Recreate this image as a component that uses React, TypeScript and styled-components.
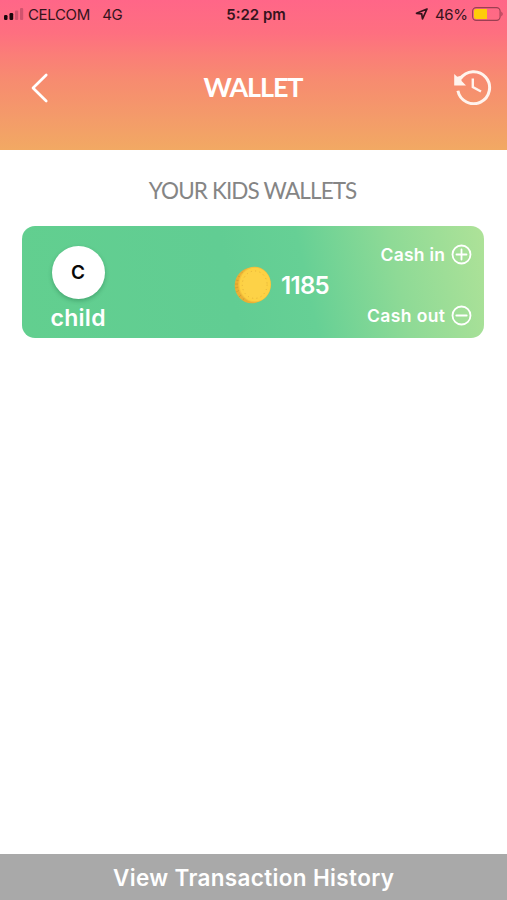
import React from 'react';
import styled, { createGlobalStyle } from 'styled-components';

const GlobalStyle = createGlobalStyle`
  * { box-sizing: border-box; }
  body { margin: 0; background: #fff; font-family: Inter, 'Liberation Sans', sans-serif; }
`;

const Screen = styled.div`
  width: 100%;
  height: 100vh;
  display: flex;
  flex-direction: column;
  overflow: hidden;
`;

const Header = styled.header`
  height: 150px;
  flex: none;
  background: linear-gradient(#ff6688 0%, #fe6f80 22%, #fb7d78 36%, #f78b70 53%, #f49a6a 77%, #f2a963 100%);
`;

const StatusBar = styled.div`
  height: 28px;
  padding: 0 3px 0 4px;
  display: grid;
  grid-template-columns: 1fr auto 1fr;
  align-items: center;
  color: #35131c;
`;

const StatusGroup = styled.div<{ $end?: boolean }>`
  display: flex;
  align-items: center;
  justify-content: ${(p) => (p.$end ? 'flex-end' : 'flex-start')};
`;

const Label = styled.span<{ $size: number; $weight?: number; $track?: number; $color?: string; $caps?: boolean }>`
  font-family: ${(p) => (p.$caps ? "Lato, 'Liberation Sans', sans-serif" : 'inherit')};
  font-size: ${(p) => p.$size}px;
  font-weight: ${(p) => p.$weight ?? 600};
  letter-spacing: ${(p) => p.$track ?? 0}px;
  margin-right: ${(p) => -(p.$track ?? 0)}px;
  color: ${(p) => p.$color ?? 'inherit'};
  line-height: 1;
  white-space: nowrap;
`;

const Signal = styled.svg`
  margin: 0 4px 0 0;
`;

const Network = styled.div`
  margin-left: 12px;
  display: flex;
`;

const Clock = styled.div`
  display: flex;
  padding-left: 4px;
`;

const Arrow = styled.svg`
  margin-right: 7px;
`;

const Battery = styled.svg`
  margin-left: 4px;
`;

const NavBar = styled.nav`
  height: 119px;
  padding: 0 15px 0 30px;
  display: grid;
  grid-template-columns: 39px 1fr 39px;
  align-items: center;
  justify-items: center;
  color: #fff;
`;

const BackIcon = styled.svg`
  justify-self: start;
`;

const HistoryIcon = styled.svg`
  margin-bottom: 4px;
`;

const NavTitle = styled.h1`
  margin: 0 0 0 -15px;
  padding-bottom: 2px;
  display: flex;
`;

const Content = styled.main`
  flex: 1;
  padding: 28px 23px 0 22px;
`;

const SectionTitle = styled.h2`
  margin: 0;
  height: 48px;
  padding-top: 2px;
  display: flex;
  justify-content: center;
`;

const Card = styled.section`
  height: 112px;
  border-radius: 13px;
  background: linear-gradient(78deg, #62cf8f 0%, #61cd93 45%, #66d095 61%, #8eda96 80%, #aee298 100%);
  display: grid;
  grid-template-columns: 112px 1fr 130px;
  color: #fff;
`;

const Owner = styled.div`
  display: flex;
  flex-direction: column;
  align-items: center;
  padding-top: 19.5px;
  gap: 8.5px;
`;

const Avatar = styled.div`
  width: 53px;
  height: 53px;
  border-radius: 50%;
  background: #fff;
  color: #080808;
  box-shadow: 0 2px 4px rgba(0, 70, 35, 0.28);
  display: flex;
  align-items: center;
  justify-content: center;
`;

const Balance = styled.div`
  display: flex;
  align-items: center;
  gap: 9px;
  padding: 6px 0 0 100px;
`;

const Amount = styled.div`
  display: flex;
  padding-top: 2px;
`;

const Actions = styled.div`
  display: flex;
  flex-direction: column;
  justify-content: space-between;
  align-items: flex-end;
  padding: 18px 12px 12px 0;
`;

const Action = styled.button`
  border: 0;
  padding: 0;
  background: none;
  color: inherit;
  font-family: inherit;
  height: 21px;
  display: flex;
  align-items: center;
  gap: 6px;
`;

const HistoryButton = styled.button`
  flex: none;
  height: 46px;
  border: 0;
  padding: 2px 0 0;
  background: #a9a9a9;
  color: #fff;
  font-family: inherit;
  display: flex;
  align-items: center;
  justify-content: center;
`;

function ActionIcon({ plus }: { plus?: boolean }) {
  return (
    <svg width="21" height="21" viewBox="0 0 21 21" fill="none" stroke="#fff" strokeWidth="1.8" strokeLinecap="round">
      <circle cx="10.5" cy="10.5" r="9" />
      <path d={plus ? 'M5.5 10.5h10M10.5 5.5v10' : 'M5.3 10.5h10.4'} />
    </svg>
  );
}

function Coin() {
  return (
    <svg width="38" height="38" viewBox="0 0 38 38">
      <ellipse cx="17.5" cy="19.5" rx="16.8" ry="17.8" fill="#e9b035" />
      <path d="M2 14l4 1M1 18h4M1 22l4-1M2 26l4-2M5 31l3-3M4 10l4 2M8 6l2 3M9 34l2-3" stroke="#cf9c30" strokeWidth="0.8" />
      <ellipse cx="20.6" cy="18.5" rx="16.4" ry="17.8" fill="#f5c03c" />
      <ellipse cx="21" cy="18.5" rx="15.5" ry="16.8" fill="#fdd143" />
      <ellipse cx="20.7" cy="18.7" rx="12.4" ry="13.7" fill="#fdd247" stroke="#e4b13b" strokeWidth="1" strokeDasharray="1 3.4" />
    </svg>
  );
}

export default function App() {
  return (
    <Screen>
      <GlobalStyle />
      <Header>
        <StatusBar>
          <StatusGroup>
            <Signal width="20" height="12" viewBox="0 0 20 12">
              <rect x="0" y="7" width="3.5" height="5" rx="1.2" fill="#19060b" />
              <rect x="5.5" y="5" width="3.7" height="7" rx="1.2" fill="#19060b" />
              <rect x="11" y="2.5" width="3.2" height="9.5" rx="1" fill="#d0536e" />
              <rect x="16" y="0" width="3.2" height="12" rx="1" fill="#d0536e" />
            </Signal>
            <Label $size={15} $weight={400} $track={-0.35}>CELCOM</Label>
            <Network><Label $size={15} $weight={400} $track={-0.4}>4G</Label></Network>
          </StatusGroup>
          <Clock><Label $size={15}>5:22 pm</Label></Clock>
          <StatusGroup $end>
            <Arrow width="13" height="12" viewBox="0 0 13 12" fill="none" stroke="#35131c" strokeWidth="1.7" strokeLinejoin="round">
              <path d="M12 1L1.5 5.3l5.2.6.8 5z" />
            </Arrow>
            <Label $size={15} $weight={400} $track={-0.4}>46%</Label>
            <Battery width="32" height="14" viewBox="0 0 32 14">
              <rect x=".6" y=".6" width="27.5" height="12.8" rx="3.6" fill="none" stroke="#9b3f52" strokeWidth="1.1" />
              <path d="M4 2h11v10H4a2 2 0 0 1-2-2V4a2 2 0 0 1 2-2z" fill="#ffcc0a" />
              <path d="M29.5 4.5q2 2.5 0 5z" fill="#8e3549" />
            </Battery>
          </StatusGroup>
        </StatusBar>
        <NavBar>
          <BackIcon width="19" height="30" viewBox="0 0 19 30" fill="none" stroke="#fff" strokeWidth="2.7" strokeLinecap="round" strokeLinejoin="round">
            <path d="M16.2 2L3 15l13.2 13" />
          </BackIcon>
          <NavTitle><Label $size={27} $weight={700} $track={-1.1} $caps>WALLET</Label></NavTitle>
          <HistoryIcon width="39" height="38" viewBox="0 0 39 38" fill="none" stroke="#fff3ed" strokeWidth="3">
            <path d="M7.4 11.6A16 16 0 1 1 4.9 23.8" />
            <path d="M1.2 7l3 2.8L8 8.8l.6 5.2 4.4 4.5H1.2z" fill="#fff3ed" stroke="none" />
            <path d="M19.8 11.5v8.6l8.2 4.4" strokeWidth="2.4" />
          </HistoryIcon>
        </NavBar>
      </Header>
      <Content>
        <SectionTitle><Label $size={22.5} $weight={400} $track={-0.88} $color="#858585" $caps>YOUR KIDS WALLETS</Label></SectionTitle>
        <Card>
          <Owner>
            <Avatar><Label $size={19}>C</Label></Avatar>
            <Label $size={23} $track={0.3}>child</Label>
          </Owner>
          <Balance>
            <Coin />
            <Amount><Label $size={24} $track={-0.7}>1185</Label></Amount>
          </Balance>
          <Actions>
            <Action><Label $size={17.5} $track={0.25}>Cash in</Label><ActionIcon plus /></Action>
            <Action><Label $size={17.5} $track={0.4}>Cash out</Label><ActionIcon /></Action>
          </Actions>
        </Card>
      </Content>
      <HistoryButton><Label $size={22.5} $track={0.35}>View Transaction History</Label></HistoryButton>
    </Screen>
  );
}
